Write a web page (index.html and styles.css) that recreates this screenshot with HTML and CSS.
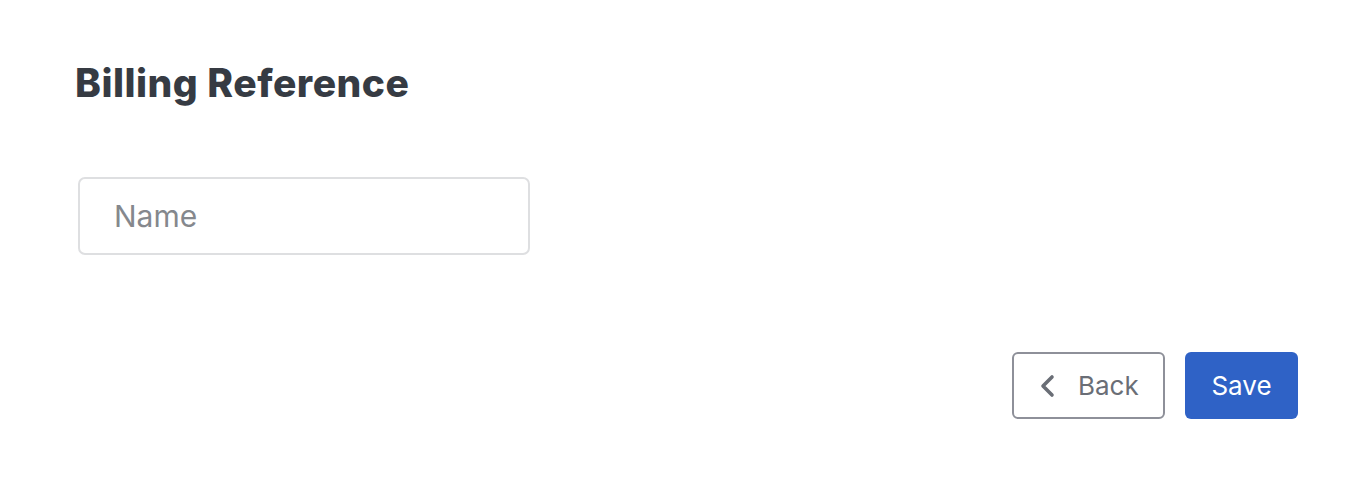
FILE: index.html
```html
<!DOCTYPE html>
<html lang="en">
<head>
<meta charset="utf-8">
<title>Billing Reference</title>
<link rel="stylesheet" href="styles.css">
</head>
<body>
<main class="page">
  <h1 class="title">Billing Reference</h1>
  <form class="form">
    <input class="field" type="text" placeholder="Name">
    <div class="actions">
      <button type="button" class="btn btn-secondary">
        <svg class="chev" width="16" height="24" viewBox="0 0 16 24" aria-hidden="true"><path d="M13 3 L4 12 L13 21" fill="none" stroke="currentColor" stroke-width="3.6" stroke-linecap="round" stroke-linejoin="round"/></svg>
        <span>Back</span>
      </button>
      <button type="button" class="btn btn-primary">Save</button>
    </div>
  </form>
</main>
</body>
</html>
```
FILE: styles.css
```css
html, body {
  margin: 0;
  padding: 0;
  background: #ffffff;
}
body {
  font-family: Inter, "Open Sans", sans-serif;
  color: #363b43;
}
.page {
  padding: 55px 48px 0 75px;
}
.title {
  margin: 0;
  font-size: 39px;
  font-weight: 800;
  line-height: 56px;
  color: #363b43;
  letter-spacing: 0.5px;
}
.form {
  display: flex;
  flex-direction: column;
  margin-top: 66px;
}
.field {
  box-sizing: border-box;
  width: 452px;
  height: 78px;
  margin-left: 3px;
  padding: 0 34px;
  border: 2px solid #dedfe1;
  border-radius: 7px;
  font-family: Inter, "Open Sans", sans-serif;
  font-size: 30px;
  color: #363b43;
  outline: none;
}
.field::placeholder {
  color: #85888d;
}
.actions {
  display: flex;
  justify-content: flex-end;
  gap: 20px;
  margin-top: 97px;
}
.btn {
  box-sizing: border-box;
  height: 67px;
  border-radius: 6px;
  font-family: Inter, "Open Sans", sans-serif;
  font-size: 26px;
  display: inline-flex;
  align-items: center;
  cursor: pointer;
}
.btn-secondary {
  width: 153px;
  padding: 0 0 0 25px;
  gap: 23px;
  background: #ffffff;
  border: 2px solid #8e9099;
  color: #6a6e76;
}
.chev {
  display: block;
}
.btn-primary {
  width: 113px;
  justify-content: center;
  background: #2f62c6;
  border: none;
  color: #ffffff;
}
```
